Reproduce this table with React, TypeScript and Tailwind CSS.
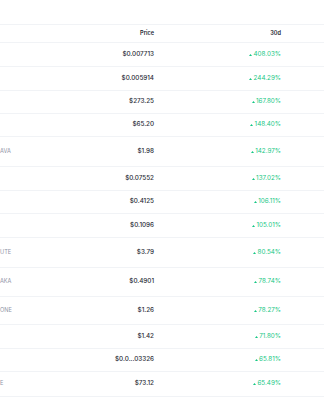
import React from 'react'

type Row = { sym: string; price: string; change: string; h: string }

const rows: Row[] = [
  { sym: '', price: '$0.007713', change: '408.03%', h: 'h-[24px]' },
  { sym: '', price: '$0.005914', change: '244.29%', h: 'h-[24px]' },
  { sym: '', price: '$273.25', change: '167.80%', h: 'h-[23px]' },
  { sym: '', price: '$65.20', change: '148.40%', h: 'h-[23px]' },
  { sym: 'AVA', price: '$1.98', change: '142.97%', h: 'h-[30px]' },
  { sym: '', price: '$0.07552', change: '137.02%', h: 'h-[24px]' },
  { sym: '', price: '$0.4125', change: '106.11%', h: 'h-[23px]' },
  { sym: '', price: '$0.1096', change: '105.01%', h: 'h-[24px]' },
  { sym: 'UTE', price: '$3.79', change: '80.54%', h: 'h-[30px]' },
  { sym: 'AKA', price: '$0.4901', change: '78.74%', h: 'h-[29px]' },
  { sym: 'ONE', price: '$1.26', change: '78.27%', h: 'h-[28px]' },
  { sym: '', price: '$1.42', change: '71.80%', h: 'h-[24px]' },
  { sym: '', price: '$0.0...03326', change: '65.81%', h: 'h-[23px]' },
  { sym: 'E', price: '$73.12', change: '65.49%', h: 'h-[25px]' },
  { sym: '', price: '', change: '', h: 'h-[24px]' },
]

function Caret() {
  return (
    <svg width="3" height="2" viewBox="0 0 3 2" className="mr-[1.5px]">
      <path d="M1.5 0 L3 2 L0 2 Z" fill="#16c784" />
    </svg>
  )
}

export default function App() {
  return (
    <div className="w-[324px] h-[400px] overflow-hidden bg-white font-['Inter',sans-serif]">
      <div className="pt-[24px]">
        {/* Header */}
        <div className="flex items-center h-[19px] border-t border-b border-[#f1f3f6] text-[5.6px] font-semibold text-[#222531]">
          <div className="w-[60px]" />
          <div className="w-[94px] text-right">Price</div>
          <div className="w-[127px] text-right">30d</div>
        </div>

        {rows.map((r, i) => (
          <div
            key={i}
            className={`flex items-center border-b border-[#f1f3f6] ${r.h}`}
          >
            <div className="w-[60px] text-[5.6px] text-[#8f94a6] leading-none">{r.sym}</div>
            <div className="w-[94px] text-right text-[6.3px] font-medium text-[#2b2e38]">{r.price}</div>
            <div className="w-[127px] flex items-center justify-end text-[6.3px] text-[#16c784]">
              {r.change && <Caret />}
              {r.change}
            </div>
          </div>
        ))}
      </div>
    </div>
  )
}
